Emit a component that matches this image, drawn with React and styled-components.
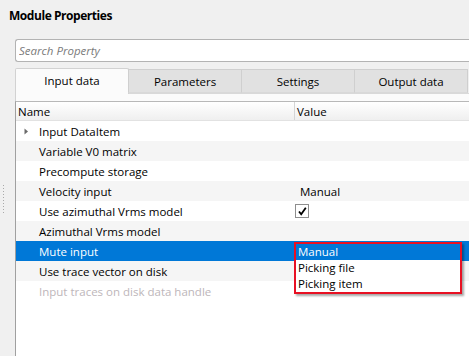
import React from "react";
import styled, { createGlobalStyle } from "styled-components";

const GlobalStyle = createGlobalStyle`
  html, body { margin: 0; padding: 0; background: #f0f0f0; }
  * { box-sizing: border-box; }
`;

const tabs = ["Input data", "Parameters", "Settings", "Output data"];

const rows = [
    { name: "Input DataItem", expandable: true },
    { name: "Variable V0 matrix" },
    { name: "Precompute storage" },
    { name: "Velocity input", value: "Manual" },
    { name: "Use azimuthal Vrms model", checked: true },
    { name: "Azimuthal Vrms model" },
    { name: "Mute input", selected: true, open: true },
    { name: "Use trace vector on disk" },
    { name: "Input traces on disk data handle", disabled: true },
];

const options = ["Manual", "Picking file", "Picking item"];

const ModuleProperties = () => {
    return (
        <Page>
            <Title>Module Properties</Title>
            <Body>
                <Gutter>
                    <Grip />
                </Gutter>
                <Main>
                    <Search placeholder="Search Property" />
                    <TabBar>
                        {tabs.map((t, i) => (
                            <Tab key={t} active={i === 0}>{t}</Tab>
                        ))}
                    </TabBar>
                    <Pane>
                        <Table>
                            <HeaderRow>
                                <HeaderCell>Name</HeaderCell>
                                <HeaderCell divider>Value</HeaderCell>
                            </HeaderRow>
                            {rows.map((r, i) => (
                                <Row key={r.name} alt={i % 2 === 1} selected={r.selected} disabled={r.disabled}>
                                    <NameCell>
                                        <Expander>
                                            {r.expandable && (
                                                <svg width="5" height="7" viewBox="0 0 5 7">
                                                    <path d="M0.5 0.5 L4 3.5 L0.5 6.5 Z" fill="#6a6a6a" />
                                                </svg>
                                            )}
                                        </Expander>
                                        {r.name}
                                    </NameCell>
                                    <ValueCell tight={r.checked}>
                                        {r.value}
                                        {r.checked && (
                                            <Checkbox>
                                                <svg width="11" height="11" viewBox="0 0 11 11">
                                                    <path d="M2 5.5 L4.2 8.3 L8.8 1.8" fill="none" stroke="#000" strokeWidth="1.8" />
                                                </svg>
                                            </Checkbox>
                                        )}
                                        {r.open && (
                                            <Dropdown>
                                                {options.map((o, j) => (
                                                    <Option key={o} highlighted={j === 0}>{o}</Option>
                                                ))}
                                            </Dropdown>
                                        )}
                                    </ValueCell>
                                </Row>
                            ))}
                        </Table>
                    </Pane>
                </Main>
            </Body>
        </Page>
    );
};

const Page = styled.div`
    width: 469px;
    height: 356px;
    overflow: hidden;
    background: #f0f0f0;
    display: flex;
    flex-direction: column;
    font-family: "Segoe UI", "Open Sans", sans-serif;
    font-size: 11.5px;
    color: #000;
`;

const Title = styled.div`
    height: 30px;
    padding: 8px 0 0 9px;
    font-size: 12px;
    font-weight: bold;
    line-height: 16px;
    letter-spacing: -0.45px;
`;

const Body = styled.div`
    flex: 1;
    display: flex;
    min-height: 0;
`;

const Gutter = styled.div`
    width: 15px;
    flex: none;
`;

const Grip = styled.div`
    width: 1px;
    height: 29px;
    margin: 155px 0 0 3px;
    background: repeating-linear-gradient(to bottom, #a9a9a9 0 1px, transparent 1px 3px);
`;

const Main = styled.div`
    flex: 1;
    min-width: 0;
    display: flex;
    flex-direction: column;
`;

const Search = styled.input`
    margin-top: 9px;
    height: 23px;
    width: calc(100% + 4px);
    border: 1px solid #b3b3b3;
    border-right: none;
    border-radius: 3px 0 0 3px;
    background: #fff;
    padding: 0 0 0 3px;
    font-family: inherit;
    font-size: 11.5px;
    outline: none;
    &::placeholder {
        color: #7a7a7a;
        font-style: italic;
    }
`;

const TabBar = styled.div`
    margin-top: 6px;
    height: 25px;
    display: flex;
    align-items: flex-end;
    position: relative;
    z-index: 1;
`;

const Tab = styled.div`
    width: 114px;
    flex: none;
    height: ${p => (p.active ? "26px" : "24px")};
    margin-left: -1px;
    margin-bottom: ${p => (p.active ? "-1px" : "0")};
    &:first-child { margin-left: 0; }
    border: 1px solid ${p => (p.active ? "#d2d2d2" : "#cfcfcf")};
    border-bottom: ${p => (p.active ? "none" : "1px solid #d9d9d9")};
    border-radius: ${p => (p.active ? "2px 2px 0 0" : "0")};
    background: ${p => (p.active ? "#fbfbfb" : "#e1e1e1")};
    display: flex;
    align-items: center;
    justify-content: center;
    padding-bottom: ${p => (p.active ? "2px" : "0")};
`;

const Pane = styled.div`
    flex: 1;
    min-height: 0;
    display: flex;
    flex-direction: column;
    background: #fbfbfb;
    border-left: 1px solid #d2d2d2;
    border-top: 1px solid #d9d9d9;
    padding-top: 7px;
`;

const Table = styled.div`
    flex: 1;
    margin-left: -1px;
    background: #fff;
    border-left: 1px solid #a0a0a0;
    border-top: 1px solid #b8b8b8;
`;

const HeaderRow = styled.div`
    display: grid;
    grid-template-columns: 278px 1fr;
    height: 19px;
    background: linear-gradient(#ffffff, #efefef);
    border-bottom: 1px solid #e2e2e2;
`;

const HeaderCell = styled.div`
    display: flex;
    align-items: center;
    padding-left: 2px;
    border-left: ${p => (p.divider ? "1px solid #d5d5d5" : "none")};
`;

const Row = styled.div`
    display: grid;
    grid-template-columns: 278px 1fr;
    height: 20px;
    background: ${p => (p.selected ? "#0078d7" : p.alt ? "#f5f5f5" : "#ffffff")};
    color: ${p => (p.selected ? "#ffffff" : p.disabled ? "#bdb6ba" : "#000")};
`;

const NameCell = styled.div`
    display: flex;
    align-items: center;
    padding-left: 8px;
    white-space: nowrap;
`;

const Expander = styled.span`
    width: 15px;
    flex: none;
    display: flex;
    align-items: center;
`;

const ValueCell = styled.div`
    position: relative;
    display: flex;
    align-items: center;
    padding-left: ${p => (p.tight ? "1px" : "6px")};
`;

const Checkbox = styled.span`
    width: 14px;
    height: 14px;
    border: 1px solid #8e8e8e;
    background: #fff;
    display: flex;
    align-items: center;
    justify-content: center;
`;

const Dropdown = styled.div`
    position: absolute;
    top: 1px;
    left: 0;
    width: 168px;
    background: #fff;
    border: 2px solid #e81123;
    box-shadow: 2px 2px 2px rgba(0, 0, 0, 0.35);
    z-index: 2;
    color: #000;
`;

const Option = styled.div`
    height: 16px;
    line-height: 16px;
    padding-left: 2px;
    background: ${p => (p.highlighted ? "#0078d7" : "#fff")};
    color: ${p => (p.highlighted ? "#fff" : "#000")};
`;

const App = () => (
    <>
        <GlobalStyle />
        <ModuleProperties />
    </>
);

export default App;
